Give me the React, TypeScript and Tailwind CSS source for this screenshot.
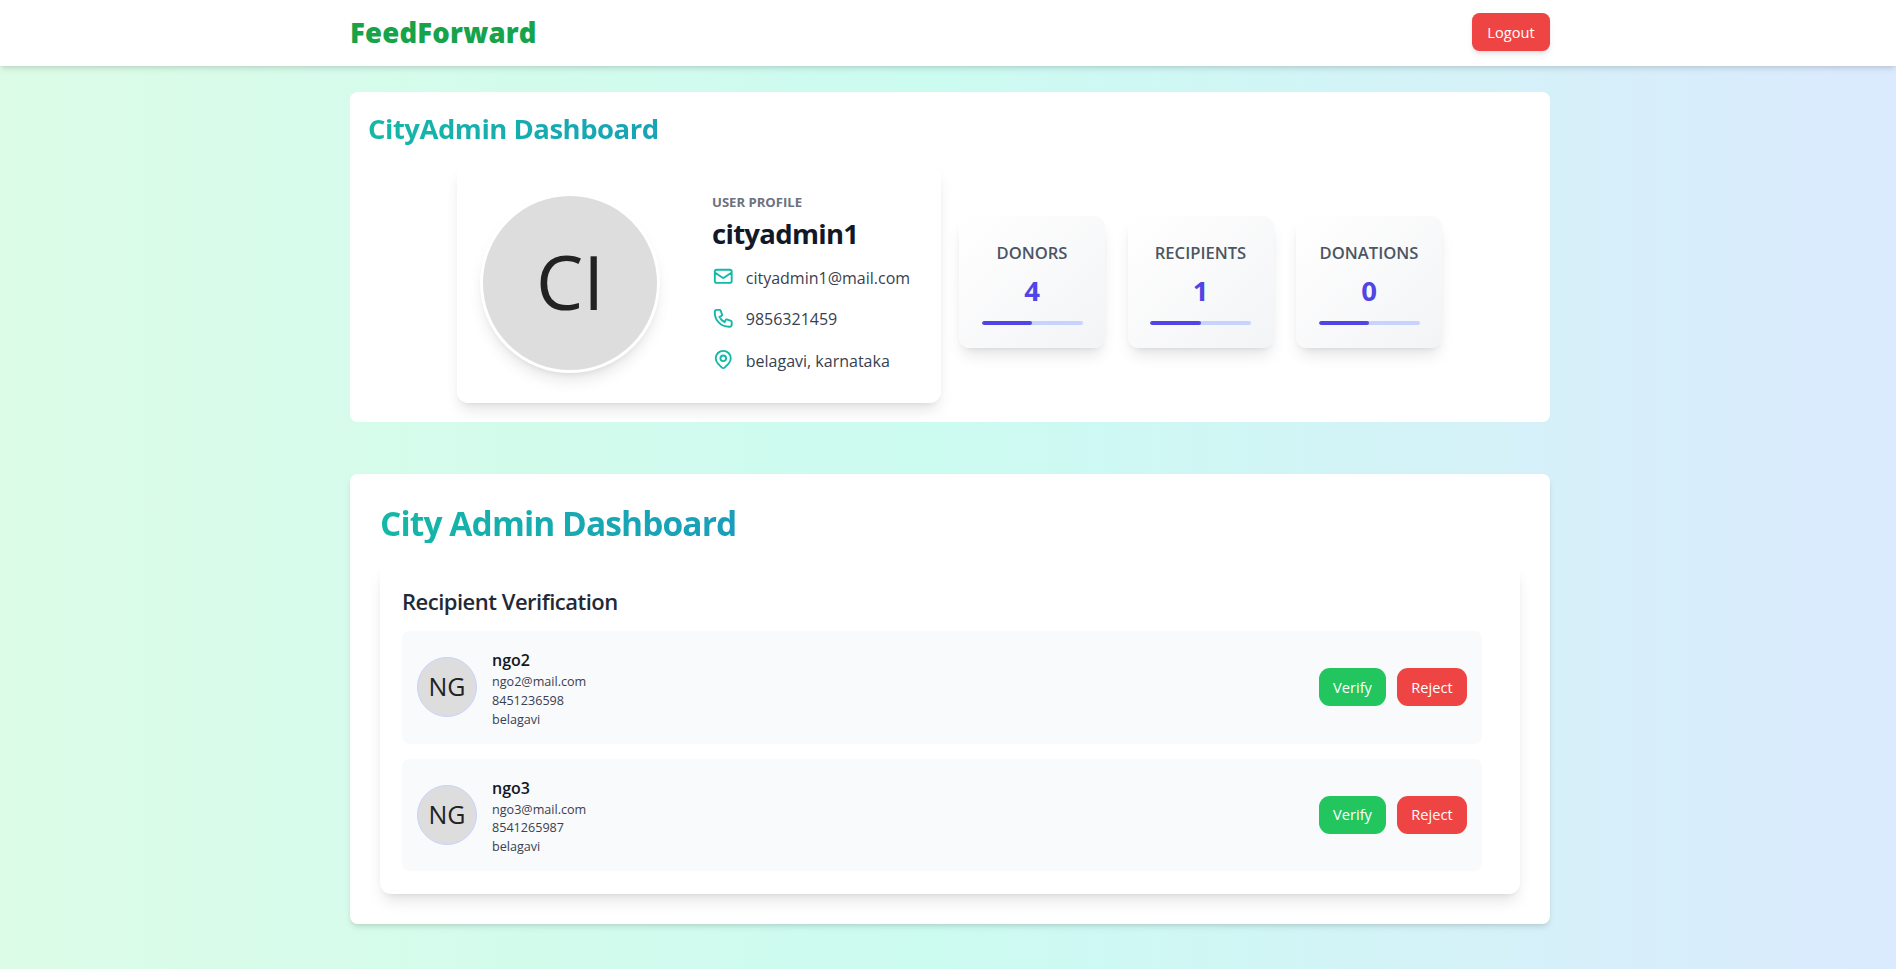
type Contact = { icon: string[]; text: string };

const stats = [
  { label: "DONORS", value: 4 },
  { label: "RECIPIENTS", value: 1 },
  { label: "DONATIONS", value: 0 },
];

const recipients = [
  { name: "ngo2", email: "ngo2@mail.com", phone: "8451236598", city: "belagavi" },
  { name: "ngo3", email: "ngo3@mail.com", phone: "8541265987", city: "belagavi" },
];

const contacts: Contact[] = [
  {
    icon: [
      "M3 8l7.89 5.26a2 2 0 002.22 0L21 8M5 19h14a2 2 0 002-2V7a2 2 0 00-2-2H5a2 2 0 00-2 2v10a2 2 0 002 2z",
    ],
    text: "cityadmin1@mail.com",
  },
  {
    icon: [
      "M3 5a2 2 0 012-2h3.28a1 1 0 01.948.684l1.498 4.493a1 1 0 01-.502 1.21l-2.257 1.13a11.042 11.042 0 005.516 5.516l1.13-2.257a1 1 0 011.21-.502l4.493 1.498a1 1 0 01.684.949V19a2 2 0 01-2 2h-1C9.716 21 3 14.284 3 6V5z",
    ],
    text: "9856321459",
  },
  {
    icon: [
      "M17.657 16.657L13.414 20.9a1.998 1.998 0 01-2.827 0l-4.244-4.243a8 8 0 1111.314 0z",
      "M15 11a3 3 0 11-6 0 3 3 0 016 0z",
    ],
    text: "belagavi, karnataka",
  },
];

function Header() {
  return (
    <header className="relative z-10 h-[66px] bg-white pl-1 shadow-md">
      <div className="mx-auto flex h-full w-[1200px] items-center justify-between pb-[2px]">
        <span className="pt-[2px] text-[27.5px] leading-[34px] font-extrabold tracking-[0.2px] text-[#16a34a]">
          FeedForward
        </span>
        <button className="h-[38px] w-[78px] rounded-[7.5px] bg-[#ef4444] pt-px text-[14.6px] text-white shadow-md">
          Logout
        </button>
      </div>
    </header>
  );
}

function Profile() {
  return (
    <div className="flex h-[239px] w-[484px] shrink-0 rounded-[11px] bg-white pt-[29px] pl-[23px] shadow-lg">
      <div className="flex size-[180px] shrink-0 items-center justify-center rounded-full border-[3px] border-white bg-[#ddd] pb-1 text-[75px] text-[#222] shadow-lg">
        CI
      </div>
      <div className="ml-[52px]">
        <div className="text-[13.1px] leading-[18px] font-bold text-[#6b7280]">USER PROFILE</div>
        <div className="mt-[6px] text-[27.5px] leading-[34px] font-bold tracking-[-0.7px] text-[#111827]">
          cityadmin1
        </div>
        <div className="mt-[12.5px] flex flex-col gap-[15.25px]">
          {contacts.map(({ icon, text }) => (
            <div key={text} className="flex h-[26.25px] items-center gap-[11.25px] text-[16px] text-[#374151]">
              <svg
                className="size-[22.5px] shrink-0 text-[#14b8a6]"
                viewBox="0 0 24 24"
                fill="none"
                stroke="currentColor"
                strokeWidth={2}
                strokeLinecap="round"
                strokeLinejoin="round"
              >
                {icon.map((d) => (
                  <path key={d} d={d} />
                ))}
              </svg>
              <span className="pt-[2px]">{text}</span>
            </div>
          ))}
        </div>
      </div>
    </div>
  );
}

function Stats() {
  return (
    <div className="flex gap-[22.5px] pb-[3px]">
      {stats.map((s) => (
        <div
          key={s.label}
          className="flex h-[132px] w-[146px] shrink-0 flex-col items-center rounded-[11px] bg-linear-to-br/srgb from-white to-[#f3f4f6] pt-[24px] shadow-lg"
        >
          <div className="text-[16.6px] leading-[26px] font-semibold text-[#4b5563]">{s.label}</div>
          <div className="mt-[8px] text-[27.5px] leading-[34px] font-bold text-[#4f46e5]">{s.value}</div>
          <div className="mt-[13px] h-1 w-[101px] overflow-hidden rounded-full bg-[#c7d2fe]">
            <div className="h-full w-1/2 rounded-full bg-[#4f46e5]" />
          </div>
        </div>
      ))}
    </div>
  );
}

function RecipientRow({ name, email, phone, city }: (typeof recipients)[number]) {
  return (
    <li className="flex h-[112.5px] items-center rounded-[7.5px] bg-[#f9fafb] px-[15px]">
      <div className="flex size-[60px] items-center justify-center rounded-full border border-[#c7d2fe] bg-[#ddd] pb-px text-[25px] text-[#222]">
        NG
      </div>
      <div className="ml-[15px] flex-1 pt-[2px]">
        <div className="text-[16px] leading-[26px] font-semibold text-[#111827]">{name}</div>
        <div className="text-[12.6px] leading-[18.75px] text-[#374151]">
          <div>{email}</div>
          <div>{phone}</div>
          <div>{city}</div>
        </div>
      </div>
      <div className="flex gap-[11px] text-[14.6px] text-white">
        <button className="h-[38px] w-[67px] rounded-[11px] bg-[#22c55e] pt-px">Verify</button>
        <button className="h-[38px] w-[70px] rounded-[11px] bg-[#ef4444] pt-px">Reject</button>
      </div>
    </li>
  );
}

export default function App() {
  return (
    <div className="h-[969px] overflow-hidden bg-linear-to-r/srgb from-[#dcfce7] via-[#ccfbf1] to-[#dbeafe] font-['Open_Sans','Noto_Sans',sans-serif]">
      <Header />
      <main className="pt-[26px] pl-1">
        <section className="mx-auto h-[330px] w-[1200px] rounded-[7.5px] bg-white px-[18px] pt-[20px]">
          <h1 className="bg-linear-to-r/srgb from-[#14b8a6] to-[#2563eb] bg-clip-text text-[27.5px] leading-[33px] font-bold tracking-[-0.5px] text-transparent">
            CityAdmin Dashboard
          </h1>
          <div className="mt-[19px] flex items-center justify-center gap-[18px] pr-px">
            <Profile />
            <Stats />
          </div>
        </section>
        <section className="mx-auto mt-[52px] h-[450px] w-[1200px] rounded-[7.5px] bg-white px-[30px] pt-[31px] shadow-md">
          <h2 className="bg-linear-to-r/srgb from-[#14b8a6] to-[#2563eb] bg-clip-text text-[33.5px] leading-[37.5px] font-bold tracking-[-0.9px] text-transparent">
            City Admin Dashboard
          </h2>
          <div className="mt-[19px] h-[332px] rounded-[11px] bg-white px-[22px] pt-[22.5px] shadow-lg">
            <h3 className="text-[22px] leading-[34px] font-semibold tracking-[-0.5px] text-[#1f2937]">
              Recipient Verification
            </h3>
            <ul className="mt-[13px] flex w-[1080px] flex-col gap-[15px]">
              {recipients.map((r) => (
                <RecipientRow key={r.name} {...r} />
              ))}
            </ul>
          </div>
        </section>
      </main>
    </div>
  );
}
